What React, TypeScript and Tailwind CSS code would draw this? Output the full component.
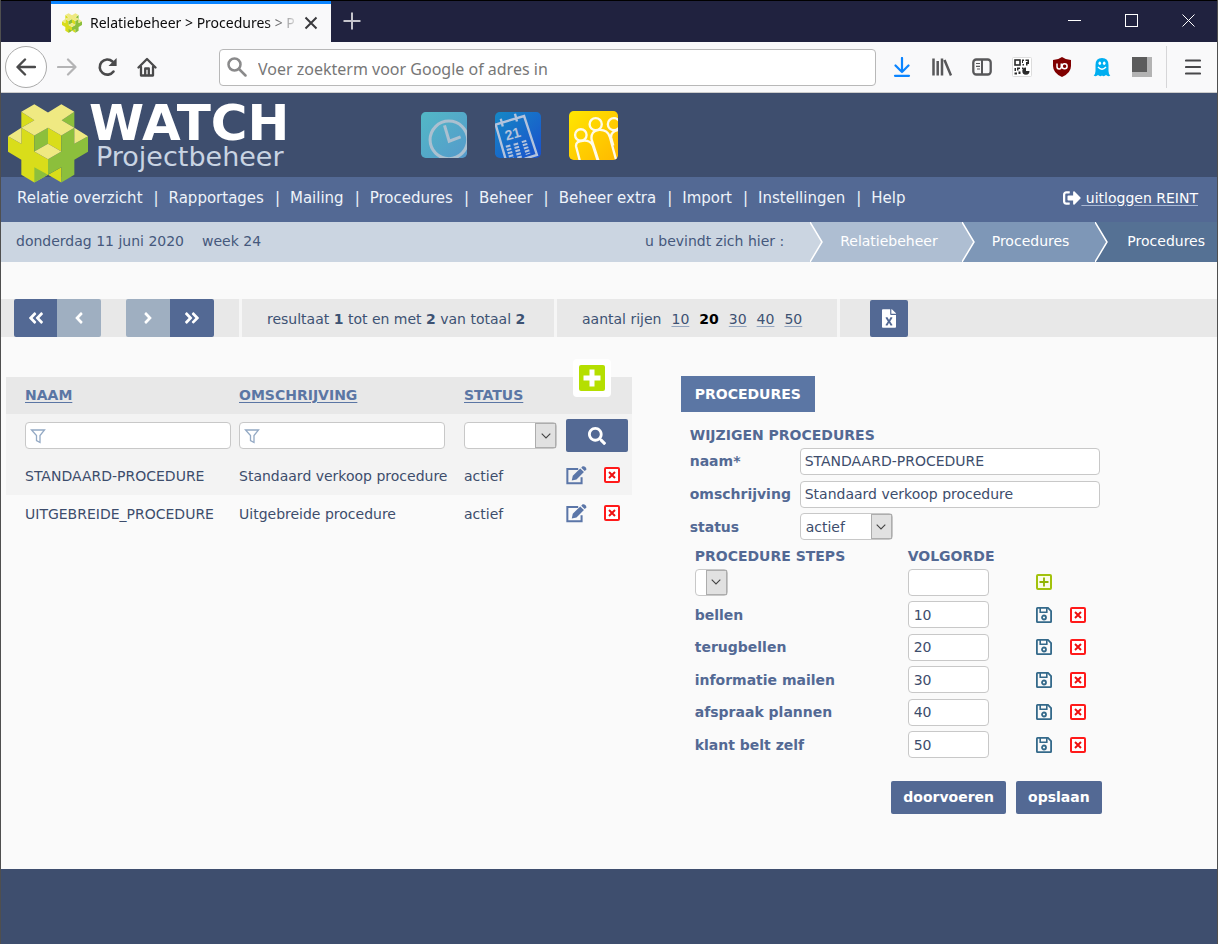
import type { ReactNode } from "react";
import {
  FaAngleDoubleLeft,
  FaAngleDoubleRight,
  FaAngleLeft,
  FaAngleRight,
  FaFileExcel,
  FaSearch,
  FaSignOutAlt,
} from "react-icons/fa";

const menu = [
  "Relatie overzicht",
  "Rapportages",
  "Mailing",
  "Procedures",
  "Beheer",
  "Beheer extra",
  "Import",
  "Instellingen",
  "Help",
];

const procedures = [
  { naam: "STANDAARD-PROCEDURE", omschrijving: "Standaard verkoop procedure", status: "actief" },
  { naam: "UITGEBREIDE_PROCEDURE", omschrijving: "Uitgebreide procedure", status: "actief" },
];

const steps = [
  { naam: "bellen", volgorde: 10 },
  { naam: "terugbellen", volgorde: 20 },
  { naam: "informatie mailen", volgorde: 30 },
  { naam: "afspraak plannen", volgorde: 40 },
  { naam: "klant belt zelf", volgorde: 50 },
];

const Logo = ({ className }: { className: string }) => (
  <svg viewBox="12 18 240 236" className={className} aria-hidden="true">
    <path fill="#d9dd1a" d="M52 41 91 66 52 89ZM12 114 52 137V89L91 112V160L132 183V230L91 253 52 230V185L12 161ZM132 89 172 112V160L132 137ZM132 230 172 207V253Z" />
    <path fill="#8cbf3c" d="M211 41V89L173 66ZM91 112 132 89V137L91 160ZM132 183 172 160V112L211 89V137L252 114V161L211 185V230L172 253V207L132 230ZM91 207 132 230 91 253Z" />
    <path fill="#efe982" d="M91 18 132 43 172 18 211 41 173 66 211 89 172 112 132 89 91 112 52 89 91 66 52 41ZM52 89V137L12 114ZM211 89V137L252 114ZM132 137 172 160 132 183 91 160Z" />
  </svg>
);

const ClockTile = () => (
  <svg viewBox="60 67 137 137" className="h-[46px] w-[46px]" aria-hidden="true">
    <defs>
      <linearGradient id="clock" x1="0" y1="0" x2="1" y2="1">
        <stop offset="0" stopColor="#52b8c6" />
        <stop offset="1" stopColor="#559acb" />
      </linearGradient>
      <clipPath id="clockClip">
        <rect x="60" y="67" width="137" height="137" rx="14" />
      </clipPath>
    </defs>
    <g clipPath="url(#clockClip)" fill="none" stroke="#abc0d0" strokeWidth="9">
      <rect x="60" y="67" width="137" height="137" fill="url(#clock)" stroke="none" />
      <circle cx="143" cy="150" r="56" />
      <path d="M130 107 144 154 178 141" />
    </g>
  </svg>
);

const CalendarTile = () => (
  <svg viewBox="286 67 136 136" className="h-[46px] w-[46px]" aria-hidden="true">
    <defs>
      <linearGradient id="cal" x1="0" y1="0" x2="1" y2="1">
        <stop offset="0" stopColor="#1588c6" />
        <stop offset="1" stopColor="#1a50cc" />
      </linearGradient>
      <clipPath id="calClip">
        <rect x="286" y="67" width="136" height="136" rx="14" />
      </clipPath>
    </defs>
    <g clipPath="url(#calClip)" fill="none" stroke="#b3c3dc" strokeWidth="7">
      <rect x="286" y="67" width="136" height="136" fill="url(#cal)" stroke="none" />
      <path d="M319 212 288 104 372 79 410 194 374 205M303 87 309 110M345 72 351 95" />
      <path strokeWidth="14" strokeDasharray="6 4" d="M324 165 336 206M347 159 360 206M371 151 384 192" />
      <text x="320" y="152" transform="rotate(-16 320 152)" fill="#b3c3dc" stroke="none" className="font-['Liberation_Sans',sans-serif] text-[42px] font-bold">
        21
      </text>
    </g>
  </svg>
);

const PeopleTile = () => (
  <svg viewBox="507 63 145 145" className="h-[49px] w-[49px]" aria-hidden="true">
    <defs>
      <linearGradient id="people" x1="0" y1="0" x2="1" y2="1">
        <stop offset="0" stopColor="#ffe600" />
        <stop offset="1" stopColor="#ffb900" />
      </linearGradient>
      <clipPath id="peopleClip">
        <rect x="507" y="63" width="145" height="145" rx="14" />
      </clipPath>
    </defs>
    <g clipPath="url(#peopleClip)" fill="none" stroke="#fffbe8" strokeWidth="7">
      <rect x="507" y="63" width="145" height="145" fill="url(#people)" stroke="none" />
      <circle cx="542" cy="134" r="17" />
      <circle cx="586" cy="102" r="18" />
      <circle cx="640" cy="102" r="18" />
      <path d="M539 210 528 168Q526 152 548 151 570 149 578 166L592 210M594 210 574 148Q570 122 597 119 621 118 628 140L647 210M660 118Q628 122 632 143L638 165" />
    </g>
  </svg>
);

const EditIcon = () => (
  <svg viewBox="0 0 62 56" className="h-[19px] w-[21px]" aria-hidden="true">
    <path fill="none" stroke="#5b76a8" strokeWidth="6" d="M36 9H4V51H46V33" />
    <path fill="#5b76a8" d="M17 43 20 29 42 7 53 18 31 40ZM45 5 49 1Q53-1 57 3T60 11L55 15Z" />
  </svg>
);

const CrossIcon = () => (
  <svg viewBox="0 0 16 16" className="h-4 w-4" aria-hidden="true">
    <rect x="1" y="1" width="14" height="14" rx="1" fill="#fff" stroke="#ff1a1a" strokeWidth="2" />
    <path d="M5 5 11 11M11 5 5 11" stroke="#ee1111" strokeWidth="2" />
  </svg>
);

const SaveIcon = () => (
  <svg viewBox="0 0 16 16" className="h-4 w-4" fill="none" stroke="#34698a" aria-hidden="true">
    <path strokeWidth="1.8" d="M1.5.9H12L15.1 4V14.5Q15.1 15.1 14.5 15.1H1.5Q.9 15.1 .9 14.5V1.5Q.9.9 1.5.9Z" />
    <path strokeWidth="1.6" d="M4.2 1V5.3H10.8V1" />
    <circle cx="8" cy="10.5" r="2" strokeWidth="1.8" />
  </svg>
);

const AddIcon = () => (
  <svg viewBox="0 0 16 16" className="h-4 w-4" aria-hidden="true">
    <rect x="1" y="1" width="14" height="14" rx="1" fill="#fbfde8" stroke="#a2c20c" strokeWidth="2" />
    <path d="M8 3.5V12.5M3.5 8H12.5" stroke="#8fb400" strokeWidth="1.8" />
  </svg>
);

const FunnelIcon = () => (
  <svg viewBox="0 0 16 16" className="h-4 w-4 shrink-0" aria-hidden="true">
    <path d="M1.5 2H14.5L10 7.5V14.5L6.5 12.5V7.5Z" fill="none" stroke="#93a9c4" strokeWidth="1.3" />
  </svg>
);

// arrow between two breadcrumbs, "from" is the colour on its left
const Chevron = ({ from }: { from: string }) => (
  <svg viewBox="0 0 14 40" className="h-10 w-[14px] shrink-0" aria-hidden="true">
    <path d="M0 0 12 20 0 40Z" fill={from} />
    <path d="M0 0 12 20 0 40" fill="none" stroke="#fff" strokeWidth="1.5" />
  </svg>
);

interface SelectBoxProps {
  id: string;
  label: string;
  width: string;
  options: string[];
}

const SelectBox = ({ id, label, width, options }: SelectBoxProps) => (
  <div className={`relative h-[27px] ${width}`}>
    <select
      id={id}
      aria-label={label}
      className="h-full w-full appearance-none rounded border border-[#c8c8c8] bg-white pl-[5px] text-sm text-[#3d4d6c]"
    >
      {options.map((o) => (
        <option key={o}>{o}</option>
      ))}
    </select>
    <span className="pointer-events-none absolute inset-y-px right-px flex w-[21px] items-center justify-center border border-[#adadad] bg-[#e1e1e1]">
      <svg viewBox="0 0 10 6" className="h-[6px] w-[10px]" aria-hidden="true">
        <path d="M.7.7 5 5 9.3.7" fill="none" stroke="#444" strokeWidth="1.1" />
      </svg>
    </span>
  </div>
);

const BrowserBar = () => (
  <div className="font-['Noto_Sans',sans-serif]">
    <div className="flex h-[42px] border-t border-black bg-[#20223f]">
      <div className="ml-[50px] flex w-[280px] items-center border-t-[3px] border-[#0a84ff] bg-[#f9f9fa] pr-[13px] pl-[11px]">
        <Logo className="h-5 w-5" />
        <span className="ml-2 flex-1 text-sm whitespace-nowrap text-[#0c0c0d] [mask-image:linear-gradient(to_right,black_83%,transparent)]">
          Relatiebeheer &gt; Procedures &gt; P
        </span>
        <button aria-label="Tabblad sluiten" className="ml-1">
          <svg viewBox="0 0 14 14" className="h-[14px] w-[14px]">
            <path d="M1.5 1.5 12.5 12.5M12.5 1.5 1.5 12.5" stroke="#3a3a3d" strokeWidth="2" />
          </svg>
        </button>
      </div>
      <button aria-label="Nieuw tabblad" className="ml-3 pb-px">
        <svg viewBox="0 0 18 18" className="h-[18px] w-[18px]">
          <path d="M9 .5V17.5M.5 9H17.5" stroke="#c5c5cc" strokeWidth="2" />
        </svg>
      </button>
      <div className="ml-auto flex items-center gap-11 pr-[22px] pb-[2px]">
        <button aria-label="Minimaliseren">
          <svg viewBox="0 0 13 13" className="h-[13px] w-[13px]">
            <path d="M0 6.5H13" stroke="#fff" />
          </svg>
        </button>
        <button aria-label="Maximaliseren">
          <svg viewBox="0 0 13 13" className="h-[13px] w-[13px]">
            <rect x=".5" y=".5" width="12" height="12" fill="none" stroke="#fff" />
          </svg>
        </button>
        <button aria-label="Sluiten">
          <svg viewBox="0 0 13 13" className="h-[13px] w-[13px]">
            <path d="M.5.5 12.5 12.5M12.5.5.5 12.5" stroke="#fff" />
          </svg>
        </button>
      </div>
    </div>

    <div className="flex h-[51px] items-center border-b border-[#ccc] bg-[#f9f9fa]">
      <button aria-label="Terug" className="ml-1 flex h-[42px] w-[42px] items-center justify-center rounded-full border border-[#aaa] bg-white">
        <svg viewBox="0 0 20 18" className="h-[18px] w-5" fill="none" stroke="#4a4a4b" strokeWidth="2.4" strokeLinecap="round" strokeLinejoin="round">
          <path d="M19 9H2M9 1.5 1.5 9 9 16.5" />
        </svg>
      </button>
      <div className="ml-[10px] flex items-center gap-5">
        <button aria-label="Vooruit">
          <svg viewBox="0 0 20 18" className="h-[18px] w-5" fill="none" stroke="#b4b4b5" strokeWidth="2.2" strokeLinecap="round" strokeLinejoin="round">
            <path d="M1 9H18M11 1.5 18.5 9 11 16.5" />
          </svg>
        </button>
        <button aria-label="Vernieuwen">
          <svg viewBox="0 0 20 20" className="h-5 w-5">
            <path d="M16.5 14.5A7.6 7.6 0 1 1 15.5 4.5" fill="none" stroke="#4a4a4b" strokeWidth="2.6" strokeLinecap="round" />
            <path d="M19.6 1V9H11.5Z" fill="#4a4a4b" />
          </svg>
        </button>
        <button aria-label="Startpagina">
          <svg viewBox="0 0 20 20" className="h-5 w-5" fill="none" stroke="#4a4a4b" strokeWidth="2.3" strokeLinecap="round" strokeLinejoin="round">
            <path d="M1.5 10.5 10 2 18.5 10.5M4 10V18.5H16V10" />
            <path d="M8.2 18V11.5H11.8V18" />
          </svg>
        </button>
      </div>
      <div className="ml-[62px] flex h-[37px] flex-1 items-center rounded-sm border border-[#b8b8b8] bg-white pl-[7px]">
        <svg viewBox="0 0 20 20" className="h-5 w-5 shrink-0" fill="none" stroke="#8a8a8b" strokeWidth="2.5" strokeLinecap="round" aria-hidden="true">
          <circle cx="7.5" cy="7.5" r="6" />
          <path d="M12 12 18.5 18.5" />
        </svg>
        <input
          aria-label="Zoeken of adres"
          placeholder="Voer zoekterm voor Google of adres in"
          className="ml-[11px] flex-1 bg-transparent pt-[3px] text-base text-[#777] outline-none placeholder:text-[#777]"
        />
      </div>
      <div className="ml-4 flex items-center gap-5">
        <button aria-label="Downloads">
          <svg viewBox="0 0 20 20" className="h-5 w-5" fill="none" stroke="#0a84ff" strokeWidth="2.2" strokeLinecap="round" strokeLinejoin="round">
            <path d="M10 1V15M3.5 8.5 10 15 16.5 8.5M3 18.8H17" />
          </svg>
        </button>
        <button aria-label="Bibliotheek">
          <svg viewBox="0 0 20 20" className="h-5 w-5" fill="none" stroke="#58585a" strokeWidth="2.5">
            <path d="M1.5 1.5V18.5M5.7 4V18.5M10 1.5V18.5M12.5 3 19 18.5" />
          </svg>
        </button>
        <button aria-label="Zijbalk">
          <svg viewBox="0 0 20 20" className="h-5 w-5" fill="none" stroke="#58585a" strokeWidth="2.3">
            <rect x="1.3" y="2.5" width="17.4" height="15" rx="3" />
            <path d="M10 3V17" strokeWidth="2" />
            <path d="M4 6.5H8M4 9.3H8M5 12H8" strokeWidth="1.2" />
          </svg>
        </button>
        <button aria-label="QR-code">
          <svg viewBox="0 0 20 20" className="h-5 w-5" fill="#2b2b2b">
            <rect x=".5" y=".5" width="19" height="19" rx="1" fill="#fff" stroke="#ddd" />
            <rect x="3" y="3" width="5" height="5" fill="none" stroke="#2b2b2b" strokeWidth="1.6" />
            <path d="M10 2.5H12V4H11V6H10ZM10.5 7H12V8.5H10.5ZM13.5 2.5H17V7H15.5V8.5H14V5H15.5V4H13.5ZM2.5 11H4V14H2.5ZM5 10.5H8V12H6.5V13.5H5ZM2.5 15.5H5V17.5H2.5ZM6.5 14.5H8.5V17H6.5ZM10 10.5H11.5V12H10Z" />
            <path d="M14 10.5V14H17.5A3.6 3.6 0 1 1 14 10.5Z" />
          </svg>
        </button>
        <button aria-label="uBlock">
          <svg viewBox="0 0 20 20" className="h-5 w-5">
            <path d="M10 0Q14 3 19 3V9Q19 16 10 20 1 16 1 9V3Q6 3 10 0Z" fill="#800000" />
            <path d="M5 6.5V9.8Q5 12 7.2 12 9.3 12 9.3 9.8V6.5" fill="none" stroke="#fff" strokeWidth="1.5" />
            <circle cx="12.6" cy="9.3" r="2.5" fill="none" stroke="#fff" strokeWidth="1.5" />
          </svg>
        </button>
        <button aria-label="Ghostery">
          <svg viewBox="0 0 20 20" className="h-5 w-5">
            <path d="M10 1Q16.5 1 16.5 8V14Q16.5 17 18.3 18.5 16 20 14 18 12 20 10 18.5 8 20 6 18 4 20 1.7 18.5 3.5 17 3.5 14V8Q3.5 1 10 1Z" fill="#00aef0" />
            <ellipse cx="7.8" cy="6.3" rx="1.3" ry="1.8" fill="#fff" />
            <ellipse cx="12.2" cy="6.3" rx="1.3" ry="1.8" fill="#fff" />
            <path d="M6 10Q10 14.5 14 10" fill="none" stroke="#fff" strokeWidth="1.3" />
          </svg>
        </button>
        <button aria-label="Extensie">
          <svg viewBox="0 0 20 20" className="h-5 w-5">
            <path d="M0 0H20V20H0Z" fill="#b3b3b3" />
            <path d="M0 0H15V15H0Z" fill="#5c5c5c" />
          </svg>
        </button>
      </div>
      <div className="ml-[14px] h-[42px] w-px bg-[#d6d6d8]" />
      <button aria-label="Menu" className="mr-4 ml-[18px]">
        <svg viewBox="0 0 16 16" className="h-4 w-4" stroke="#48484a" strokeWidth="2.2" strokeLinecap="round">
          <path d="M1 1.5H15M1 8H15M1 14.5H15" />
        </svg>
      </button>
    </div>
  </div>
);

const Header = () => (
  <header>
    <div className="flex h-[84px] bg-[#3e4e6e]">
      <a href="#" className="flex w-[420px] pt-[11px] pl-[7px]">
        <Logo className="relative h-[79px] w-20 shrink-0" />
        <span className="ml-px">
          <span className="block text-[50px] leading-[39px] font-bold text-white">WATCH</span>
          <span className="block pl-[7px] text-[27px] leading-[27px] text-[#c9d4e3]">Projectbeheer</span>
        </span>
      </a>
      <div className="flex items-center gap-7">
        <a href="#" aria-label="Uren"><ClockTile /></a>
        <a href="#" aria-label="Agenda"><CalendarTile /></a>
        <a href="#" aria-label="Relaties"><PeopleTile /></a>
      </div>
    </div>
    <nav className="flex h-[45px] items-center bg-[#536994] px-4 pb-1 text-[15px] text-[#eef3fa]">
      <ul className="flex pt-[2px]">
        {menu.map((item, i) => (
          <li key={item} className="flex">
            {i > 0 && <span className="pr-[10px] pl-[11px]">|</span>}
            <a href="#">{item}</a>
          </li>
        ))}
      </ul>
      <a href="#" className="mr-[3px] ml-auto flex items-center text-sm text-white">
        <FaSignOutAlt className="h-[18px] w-[18px]" />
        <span className="whitespace-pre underline decoration-[#a9b9d6] underline-offset-2"> uitloggen REINT</span>
      </a>
    </nav>
    <div className="flex h-10 items-center bg-[#cbd5e1] text-sm text-[#45587c]">
      <span className="pb-[2px] pl-[15px]">donderdag 11 juni 2020</span>
      <span className="ml-[18px] pb-[2px]">week 24</span>
      <span className="mr-[26px] ml-auto pb-[2px]">u bevindt zich hier :</span>
      <div className="flex items-center bg-[#aebed2] text-white">
        <Chevron from="#cbd5e1" />
        <a href="#" className="pr-6 pb-[2px] pl-4">Relatiebeheer</a>
      </div>
      <div className="flex items-center bg-[#7e97b7] text-white">
        <Chevron from="#aebed2" />
        <a href="#" className="pr-[26px] pb-[2px] pl-4">Procedures</a>
      </div>
      <div className="flex items-center bg-[#557194] text-white">
        <Chevron from="#7e97b7" />
        <a href="#" className="pr-3 pb-[2px] pl-[18px]">Procedures</a>
      </div>
    </div>
  </header>
);

const Pager = () => (
  <div className="mt-[37px] flex h-[38px] items-stretch bg-[#e8e8e8] text-sm text-[#3d5273]">
    <div className="flex w-[241px] border-r-[3px] border-[#f6f6f6] pl-[13px] text-white">
      <button aria-label="Eerste" className="flex w-[43px] items-center justify-center rounded-l-xs bg-[#536994]">
        <FaAngleDoubleLeft className="h-[18px] w-[18px]" />
      </button>
      <button aria-label="Vorige" className="flex w-11 items-center justify-center rounded-r-xs bg-[#9fafc1]">
        <FaAngleLeft className="h-[18px] w-[18px]" />
      </button>
      <button aria-label="Volgende" className="ml-[25px] flex w-11 items-center justify-center rounded-l-xs bg-[#9fafc1]">
        <FaAngleRight className="h-[18px] w-[18px]" />
      </button>
      <button aria-label="Laatste" className="flex w-11 items-center justify-center rounded-r-xs bg-[#536994]">
        <FaAngleDoubleRight className="h-[18px] w-[18px]" />
      </button>
    </div>
    <p className="flex w-[315px] items-center border-r-[3px] border-[#f6f6f6] pt-[2px] pl-[25px]">
      <span>
        resultaat <b>1</b> tot en met <b>2</b> van totaal <b>2</b>
      </span>
    </p>
    <div className="flex w-[283px] items-center gap-[10px] border-r-[3px] border-[#f6f6f6] pt-[2px] pl-[25px]">
      <span>aantal rijen</span>
      <a href="#" className="underline decoration-[#93a5bf] underline-offset-2">10</a>
      <b className="text-black">20</b>
      <a href="#" className="underline decoration-[#93a5bf] underline-offset-2">30</a>
      <a href="#" className="underline decoration-[#93a5bf] underline-offset-2">40</a>
      <a href="#" className="underline decoration-[#93a5bf] underline-offset-2">50</a>
    </div>
    <button aria-label="Exporteren naar Excel" className="mt-px ml-[30px] flex w-[38px] items-center justify-center rounded-xs bg-[#536994] text-white">
      <FaFileExcel className="h-[19px] w-[14px]" />
    </button>
  </div>
);

const FilterBox = ({ label }: { label: string }) => (
  <label className="mr-2 flex h-[27px] items-center rounded border border-[#c8c8c8] bg-white px-1">
    <FunnelIcon />
    <input aria-label={label} className="w-full bg-transparent pl-1 text-sm outline-none" />
  </label>
);

const ProcedureList = () => (
  <section className="relative mt-px">
    <table className="w-full table-fixed text-left text-sm text-[#3d4d6c]">
      <thead>
        <tr className="h-[37px] bg-[#e8e8e8] text-[#5b76a4]">
          <th className="w-[233px] pb-[2px] pl-[19px]"><a href="#" className="underline underline-offset-2">NAAM</a></th>
          <th className="w-[225px] pb-[2px]"><a href="#" className="underline underline-offset-2">OMSCHRIJVING</a></th>
          <th className="w-[102px] pb-[2px]"><a href="#" className="underline underline-offset-2">STATUS</a></th>
          <th />
        </tr>
      </thead>
      <tbody>
        <tr className="h-[43px] bg-[#f3f3f3]">
          <td className="pl-[19px]"><FilterBox label="Filter naam" /></td>
          <td className="pr-[11px]"><FilterBox label="Filter omschrijving" /></td>
          <td><SelectBox id="filter-status" label="Filter status" width="w-[93px]" options={["", "actief"]} /></td>
          <td>
            <button aria-label="Zoeken" className="flex h-[33px] w-[62px] items-center justify-center rounded-xs bg-[#536994] text-white">
              <FaSearch className="h-[18px] w-[18px]" />
            </button>
          </td>
        </tr>
        {procedures.map((p) => (
          <tr key={p.naam} className="h-[38px] odd:bg-transparent even:bg-[#f3f3f3]">
            <td className="pl-[19px]">{p.naam}</td>
            <td>{p.omschrijving}</td>
            <td>{p.status}</td>
            <td>
              <div className="flex items-center gap-[17px] pb-[2px]">
                <button aria-label="Wijzigen"><EditIcon /></button>
                <button aria-label="Verwijderen"><CrossIcon /></button>
              </div>
            </td>
          </tr>
        ))}
      </tbody>
    </table>
    <button aria-label="Toevoegen" className="absolute -top-[18px] right-[21px] flex h-[38px] w-[38px] items-center justify-center rounded bg-white">
      <svg viewBox="0 0 26 26" className="h-[26px] w-[26px]">
        <rect width="26" height="26" rx="2" fill="#b5df00" />
        <path d="M13 4.5V21.5M4.5 13H21.5" stroke="#fff" strokeWidth="5" />
      </svg>
    </button>
  </section>
);

const Field = ({ id, label, children }: { id: string; label: string; children: ReactNode }) => (
  <div className="flex flex-1 items-center">
    <label htmlFor={id} className="w-[110px] font-bold">{label}</label>
    {children}
  </div>
);

const ProcedureForm = () => (
  <section className="text-sm text-[#536994]">
    <h2 className="inline-flex h-9 items-center bg-[#5b76a4] px-[14px] font-bold text-white">PROCEDURES</h2>
    <form className="pl-[9px]">
      <h3 className="pt-[13px] font-bold">WIJZIGEN PROCEDURES</h3>
      <div className="flex h-[98px] flex-col">
        <Field id="naam" label="naam*">
          <input id="naam" defaultValue="STANDAARD-PROCEDURE" className="h-[27px] w-[300px] rounded border border-[#c8c8c8] bg-white px-1 text-[#3d4d6c]" />
        </Field>
        <Field id="omschrijving" label="omschrijving">
          <input id="omschrijving" defaultValue="Standaard verkoop procedure" className="h-[27px] w-[300px] rounded border border-[#c8c8c8] bg-white px-1 text-[#3d4d6c]" />
        </Field>
        <Field id="status" label="status">
          <SelectBox id="status" label="status" width="w-[93px]" options={["actief", "inactief"]} />
        </Field>
      </div>
      <table className="mt-[3px] ml-[5px] h-[215px] table-fixed text-left">
        <thead>
          <tr className="h-5">
            <th className="w-[213px]">PROCEDURE STEPS</th>
            <th className="w-[128px]">VOLGORDE</th>
            <th className="w-[34px]" />
            <th className="w-[34px]" />
          </tr>
        </thead>
        <tbody>
          <tr>
            <td><SelectBox id="step" label="Procedure step" width="w-[33px]" options={[""]} /></td>
            <td><input aria-label="Volgorde" className="block h-[27px] w-[81px] rounded border border-[#c8c8c8] bg-white px-1" /></td>
            <td><button type="button" aria-label="Toevoegen" className="block"><AddIcon /></button></td>
            <td />
          </tr>
          {steps.map((s) => (
            <tr key={s.naam}>
              <td className="font-bold">{s.naam}</td>
              <td>
                <input aria-label={`Volgorde ${s.naam}`} defaultValue={s.volgorde} className="block h-[27px] w-[81px] rounded border border-[#c8c8c8] bg-white px-[5px] text-[#3d4d6c]" />
              </td>
              <td><button type="button" aria-label="Opslaan" className="block"><SaveIcon /></button></td>
              <td><button type="button" aria-label="Verwijderen" className="block"><CrossIcon /></button></td>
            </tr>
          ))}
        </tbody>
      </table>
      <div className="mt-5 flex w-[412px] justify-end gap-[10px] font-bold text-white">
        <button type="button" className="h-[33px] rounded-xs bg-[#536994] px-3 pb-[2px]">doorvoeren</button>
        <button type="button" className="h-[33px] rounded-xs bg-[#536994] px-3 pb-[2px]">opslaan</button>
      </div>
    </form>
  </section>
);

const App = () => {
  return (
    <div className="flex min-h-screen flex-col border-x border-[#4f4f4f] bg-[#fafafa] font-['DejaVu_Sans',Verdana,sans-serif]">
      <BrowserBar />
      <Header />
      <main className="flex-1 pb-10">
        <Pager />
        <div className="mt-[39px] grid grid-cols-[7fr_6fr] gap-[49px] pl-[5px]">
          <ProcedureList />
          <ProcedureForm />
        </div>
      </main>
      <footer className="h-[75px] bg-[#3e4e6e]" />
    </div>
  );
};

export default App;
